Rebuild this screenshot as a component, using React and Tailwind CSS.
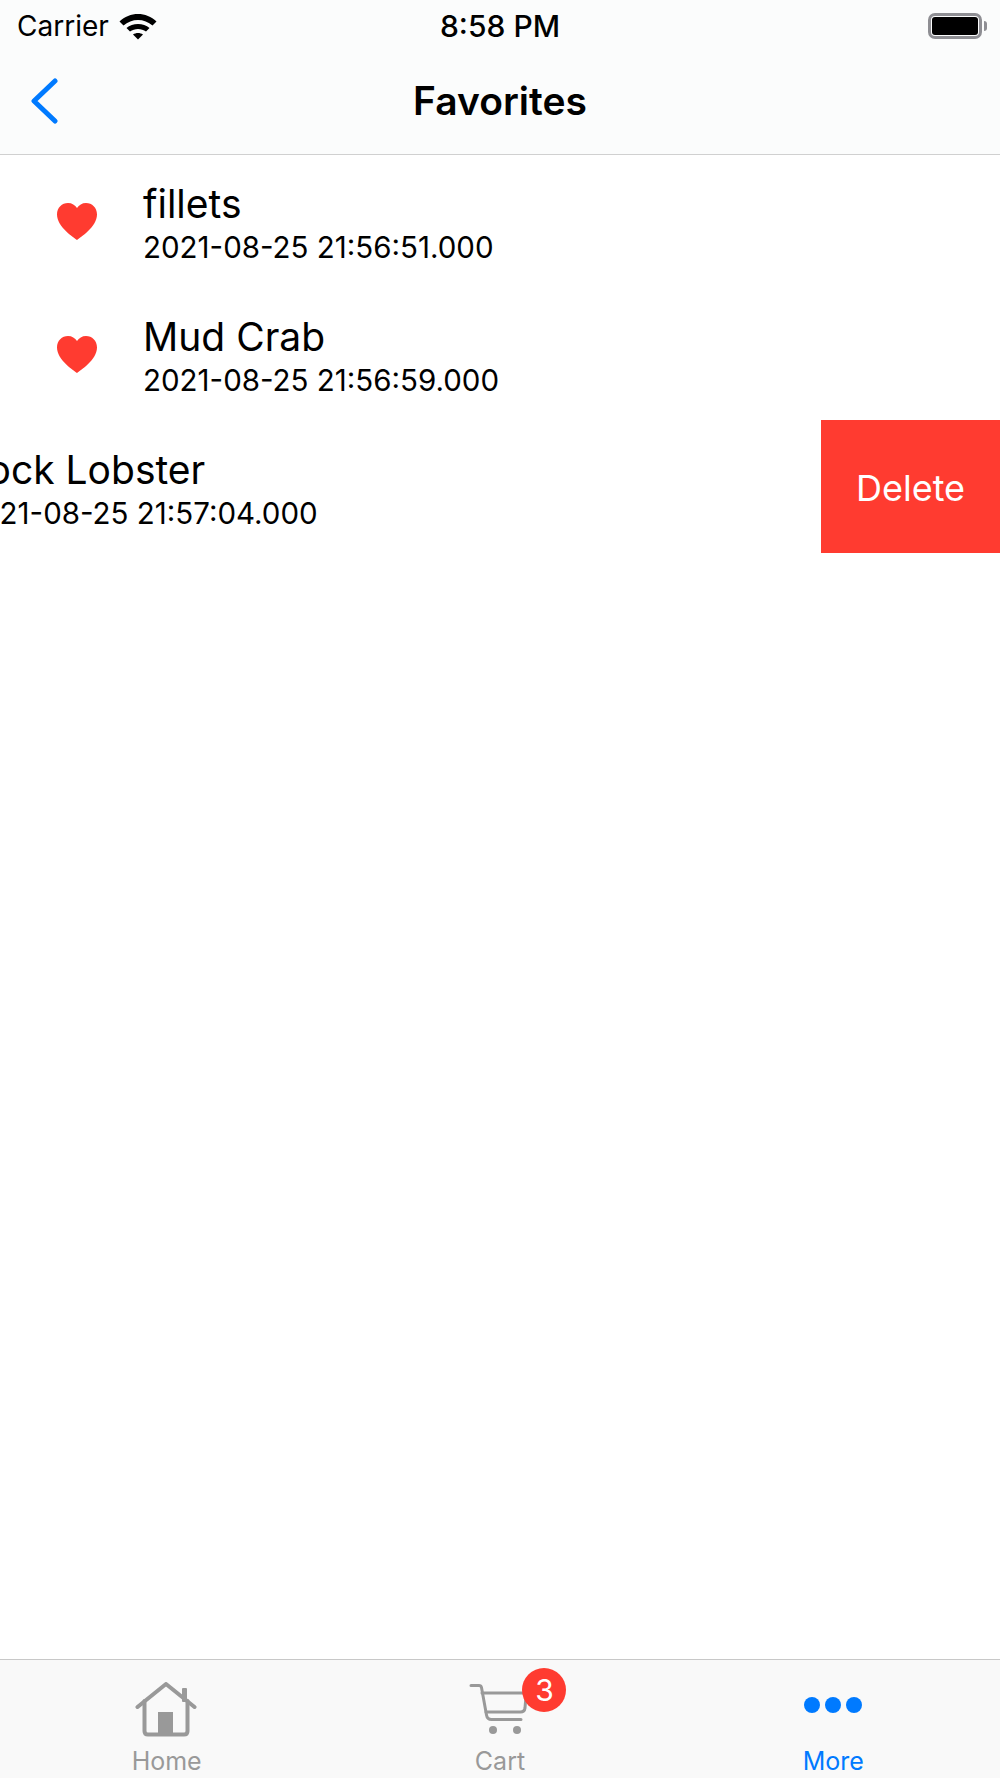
import React from "react";

const font = { fontFamily: "Inter, 'Liberation Sans', sans-serif" };

const favorites = [
  { id: 1, name: "fillets", date: "2021-08-25 21:56:51.000" },
  { id: 2, name: "Mud Crab", date: "2021-08-25 21:56:59.000" },
  { id: 3, name: "Rock Lobster", date: "2021-08-25 21:57:04.000", swiped: true },
];

const Heart = () => (
  <svg width="40" height="37" viewBox="0 0 40 37" fill="#ff3b30">
    <path d="M20 37C17 34.5 0 24 0 11.5 0 4.5 5 0 11 0c4 0 7 2 9 5 2-3 5-5 9-5 6 0 11 4.500 11 11.500C40 24 23 34.500 20 37Z" />
  </svg>
);

const Wifi = () => (
  <svg width="38" height="27" viewBox="0 0 38 27" fill="#000">
    <path d="M.5 8.500c10-10 27-10 37 0l-4 4c-8-7.500-21-7.500-29 0Z" />
    <path d="M7.500 15c6-5.500 17-5.500 23 0L27 18.500c-4.500-3.500-11.500-3.500-16 0Z" />
    <path d="M14 21.500c3-2 7-2 10 0l-5 5Z" />
  </svg>
);

const Battery = () => (
  <div className="flex items-center gap-[2px]">
    <div className="w-[54px] h-[26px] rounded-[7px] border-[3px] border-[#8e8e93] p-[1px]">
      <div className="w-full h-full rounded-[3px] bg-black" />
    </div>
    <div className="w-[3px] h-[10px] rounded-r-[3px] bg-[#8e8e93]" />
  </div>
);

const HomeIcon = () => (
  <svg width="62" height="56" viewBox="0 0 62 56" fill="none" stroke="#999" strokeWidth="4" strokeLinecap="round" strokeLinejoin="round">
    <path d="M2.500 25 31 2 59.500 25" />
    <path d="M9.500 19v30q0 3.500 3.500 3.500h36q3.500 0 3.500-3.500V19" />
    <rect x="47" y="6" width="5" height="14" rx="1" fill="#999" stroke="none" />
    <rect x="23" y="30" width="15" height="22" fill="#999" stroke="none" />
  </svg>
);

const CartIcon = () => (
  <svg width="60" height="54" viewBox="0 0 60 54" fill="none" stroke="#999" strokeWidth="3" strokeLinecap="round" strokeLinejoin="round">
    <path d="M3 2.500h8q2 0 2.500 2L18.500 32q.7 4.500 5 4.500H53" />
    <path d="M14 10h41q3 0 3 3l-1 12q-.5 4-4.500 4H18" />
    <circle cx="25" cy="47" r="4" fill="#999" stroke="none" />
    <circle cx="49" cy="47" r="4" fill="#999" stroke="none" />
  </svg>
);

const FavoriteRow = ({ item }) => (
  <div className="flex h-[133px] overflow-hidden">
    <div className={`flex items-center shrink-0 w-full pl-[57px] ${item.swiped ? "-ml-[180px]" : ""}`}>
      <div className="w-[86px] shrink-0 pt-[2px]">
        <Heart />
      </div>
      <div className="flex flex-col pt-[6px]">
        <span className="text-[39px] leading-[46px] text-black">{item.name}</span>
        <span className="mt-[1px] text-[29.500px] leading-[39px] text-black">{item.date}</span>
      </div>
    </div>
    {item.swiped && (
      <button className="w-[179px] shrink-0 ml-auto pt-[2px] bg-[#ff3b30] text-white text-[36px] flex items-center justify-center">
        Delete
      </button>
    )}
  </div>
);

const TabItem = ({ label, active, children }) => (
  <div className="flex flex-col items-center pt-[22px]">
    <div className="h-[56px] flex items-center justify-center">{children}</div>
    <span className={`mt-[9px] text-[25px] leading-[28px] ${active ? "text-[#007aff]" : "text-[#999]"}`}>
      {label}
    </span>
  </div>
);

export default function App() {
  return (
    <div className="w-[1000px] h-[1778px] flex flex-col bg-white overflow-hidden" style={font}>
      {/* Nav header */}
      <header className="h-[155px] shrink-0 bg-[#fbfcfc] border-b border-[#d0d0d0]">
        <div className="grid grid-cols-3 items-center h-[52px] px-[17px]">
          <div className="flex items-center gap-[10px]">
            <span className="text-[28px] text-black">Carrier</span>
            <Wifi />
          </div>
          <span className="text-center text-[30px] font-medium text-black">8:58 PM</span>
          <div className="flex justify-end -mr-[4px]">
            <Battery />
          </div>
        </div>
        <div className="grid grid-cols-3 items-center h-[102px] pb-[4px]">
          <svg className="ml-[30px]" width="30" height="46" viewBox="0 0 30 46" fill="none" stroke="#007aff" strokeWidth="5" strokeLinecap="round" strokeLinejoin="round">
            <path d="M25 3 4 23l21 20" />
          </svg>
          <h1 className="text-center text-[39px] font-semibold text-black">Favorites</h1>
        </div>
      </header>

      {/* List */}
      <main className="flex-1 -mt-[1px]">
        {favorites.map((item) => (
          <FavoriteRow key={item.id} item={item} />
        ))}
      </main>

      {/* Tab bar */}
      <nav className="h-[119px] shrink-0 grid grid-cols-3 bg-[#f9f9f9] border-t border-[#c8c8c8]">
        <TabItem label="Home">
          <div className="-ml-[2px]">
            <HomeIcon />
          </div>
        </TabItem>
        <TabItem label="Cart">
          <div className="relative -ml-[3px]">
            <CartIcon />
            <span className="absolute -top-[15px] left-[54px] w-[44px] h-[44px] rounded-full bg-[#ff3b30] text-white text-[30px] flex items-center justify-center">
              3
            </span>
          </div>
        </TabItem>
        <TabItem label="More" active>
          <div className="flex gap-[5px] mb-[10px]">
            <div className="w-[16px] h-[16px] rounded-full bg-[#007aff]" />
            <div className="w-[16px] h-[16px] rounded-full bg-[#007aff]" />
            <div className="w-[16px] h-[16px] rounded-full bg-[#007aff]" />
          </div>
        </TabItem>
      </nav>
    </div>
  );
}
